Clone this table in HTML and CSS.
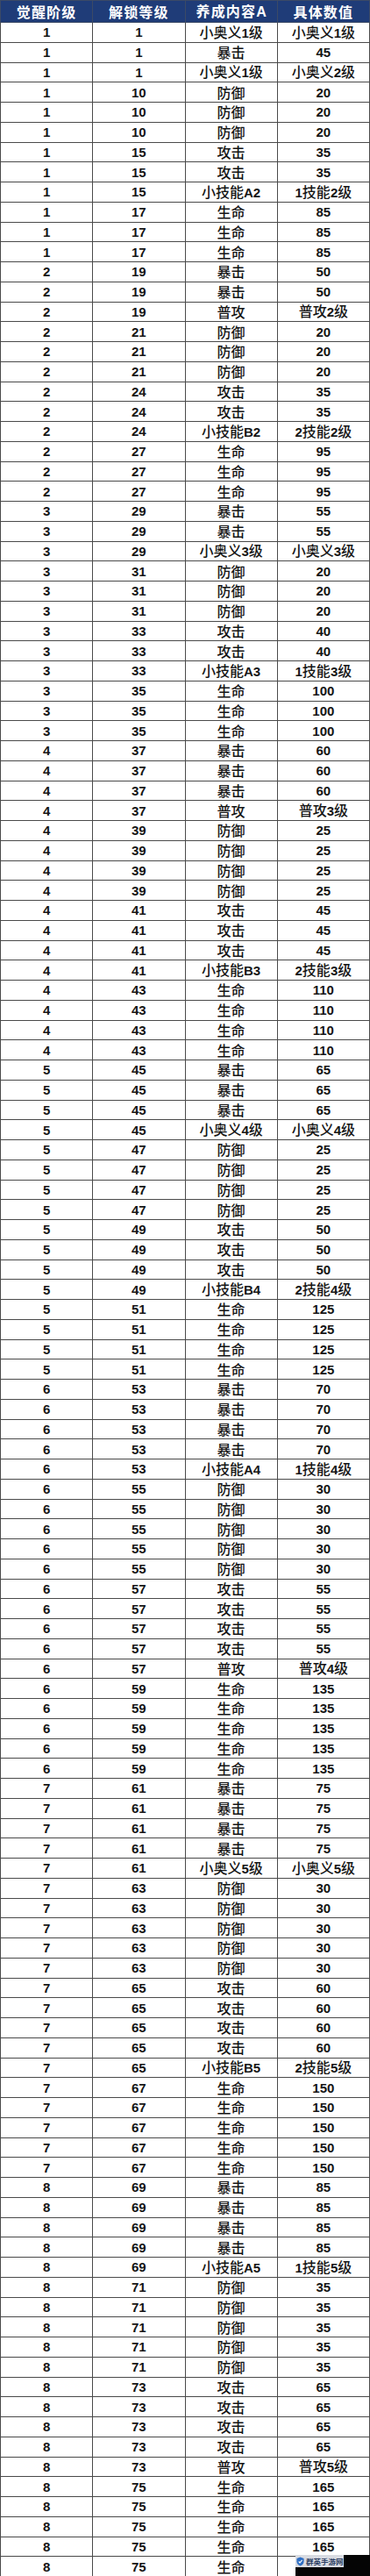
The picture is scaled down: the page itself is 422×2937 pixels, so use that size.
FILE: index.html
```html
<!DOCTYPE html>
<html lang="zh-CN">
<head>
<meta charset="utf-8">
<title>觉醒养成表</title>
<link rel="stylesheet" href="styles.css">
</head>
<body>
<div class="sheet">
<table class="grid">
<colgroup><col class="c1"><col class="c2"><col class="c3"><col class="c4"></colgroup>
<thead>
<tr class="head"><th>觉醒阶级</th><th>解锁等级</th><th>养成内容<b>A</b></th><th>具体数值</th></tr>
</thead>
<tbody>
<tr><td class="n">1</td><td class="n">1</td><td>小奥义<b>1</b>级</td><td>小奥义<b>1</b>级</td></tr>
<tr><td class="n">1</td><td class="n">1</td><td>暴击</td><td class="n">45</td></tr>
<tr><td class="n">1</td><td class="n">1</td><td>小奥义<b>1</b>级</td><td>小奥义<b>2</b>级</td></tr>
<tr><td class="n">1</td><td class="n">10</td><td>防御</td><td class="n">20</td></tr>
<tr><td class="n">1</td><td class="n">10</td><td>防御</td><td class="n">20</td></tr>
<tr><td class="n">1</td><td class="n">10</td><td>防御</td><td class="n">20</td></tr>
<tr><td class="n">1</td><td class="n">15</td><td>攻击</td><td class="n">35</td></tr>
<tr><td class="n">1</td><td class="n">15</td><td>攻击</td><td class="n">35</td></tr>
<tr><td class="n">1</td><td class="n">15</td><td>小技能<b>A2</b></td><td><b>1</b>技能<b>2</b>级</td></tr>
<tr><td class="n">1</td><td class="n">17</td><td>生命</td><td class="n">85</td></tr>
<tr><td class="n">1</td><td class="n">17</td><td>生命</td><td class="n">85</td></tr>
<tr><td class="n">1</td><td class="n">17</td><td>生命</td><td class="n">85</td></tr>
<tr><td class="n">2</td><td class="n">19</td><td>暴击</td><td class="n">50</td></tr>
<tr><td class="n">2</td><td class="n">19</td><td>暴击</td><td class="n">50</td></tr>
<tr><td class="n">2</td><td class="n">19</td><td>普攻</td><td>普攻<b>2</b>级</td></tr>
<tr><td class="n">2</td><td class="n">21</td><td>防御</td><td class="n">20</td></tr>
<tr><td class="n">2</td><td class="n">21</td><td>防御</td><td class="n">20</td></tr>
<tr><td class="n">2</td><td class="n">21</td><td>防御</td><td class="n">20</td></tr>
<tr><td class="n">2</td><td class="n">24</td><td>攻击</td><td class="n">35</td></tr>
<tr><td class="n">2</td><td class="n">24</td><td>攻击</td><td class="n">35</td></tr>
<tr><td class="n">2</td><td class="n">24</td><td>小技能<b>B2</b></td><td><b>2</b>技能<b>2</b>级</td></tr>
<tr><td class="n">2</td><td class="n">27</td><td>生命</td><td class="n">95</td></tr>
<tr><td class="n">2</td><td class="n">27</td><td>生命</td><td class="n">95</td></tr>
<tr><td class="n">2</td><td class="n">27</td><td>生命</td><td class="n">95</td></tr>
<tr><td class="n">3</td><td class="n">29</td><td>暴击</td><td class="n">55</td></tr>
<tr><td class="n">3</td><td class="n">29</td><td>暴击</td><td class="n">55</td></tr>
<tr><td class="n">3</td><td class="n">29</td><td>小奥义<b>3</b>级</td><td>小奥义<b>3</b>级</td></tr>
<tr><td class="n">3</td><td class="n">31</td><td>防御</td><td class="n">20</td></tr>
<tr><td class="n">3</td><td class="n">31</td><td>防御</td><td class="n">20</td></tr>
<tr><td class="n">3</td><td class="n">31</td><td>防御</td><td class="n">20</td></tr>
<tr><td class="n">3</td><td class="n">33</td><td>攻击</td><td class="n">40</td></tr>
<tr><td class="n">3</td><td class="n">33</td><td>攻击</td><td class="n">40</td></tr>
<tr><td class="n">3</td><td class="n">33</td><td>小技能<b>A3</b></td><td><b>1</b>技能<b>3</b>级</td></tr>
<tr><td class="n">3</td><td class="n">35</td><td>生命</td><td class="n">100</td></tr>
<tr><td class="n">3</td><td class="n">35</td><td>生命</td><td class="n">100</td></tr>
<tr><td class="n">3</td><td class="n">35</td><td>生命</td><td class="n">100</td></tr>
<tr><td class="n">4</td><td class="n">37</td><td>暴击</td><td class="n">60</td></tr>
<tr><td class="n">4</td><td class="n">37</td><td>暴击</td><td class="n">60</td></tr>
<tr><td class="n">4</td><td class="n">37</td><td>暴击</td><td class="n">60</td></tr>
<tr><td class="n">4</td><td class="n">37</td><td>普攻</td><td>普攻<b>3</b>级</td></tr>
<tr><td class="n">4</td><td class="n">39</td><td>防御</td><td class="n">25</td></tr>
<tr><td class="n">4</td><td class="n">39</td><td>防御</td><td class="n">25</td></tr>
<tr><td class="n">4</td><td class="n">39</td><td>防御</td><td class="n">25</td></tr>
<tr><td class="n">4</td><td class="n">39</td><td>防御</td><td class="n">25</td></tr>
<tr><td class="n">4</td><td class="n">41</td><td>攻击</td><td class="n">45</td></tr>
<tr><td class="n">4</td><td class="n">41</td><td>攻击</td><td class="n">45</td></tr>
<tr><td class="n">4</td><td class="n">41</td><td>攻击</td><td class="n">45</td></tr>
<tr><td class="n">4</td><td class="n">41</td><td>小技能<b>B3</b></td><td><b>2</b>技能<b>3</b>级</td></tr>
<tr><td class="n">4</td><td class="n">43</td><td>生命</td><td class="n">110</td></tr>
<tr><td class="n">4</td><td class="n">43</td><td>生命</td><td class="n">110</td></tr>
<tr><td class="n">4</td><td class="n">43</td><td>生命</td><td class="n">110</td></tr>
<tr><td class="n">4</td><td class="n">43</td><td>生命</td><td class="n">110</td></tr>
<tr><td class="n">5</td><td class="n">45</td><td>暴击</td><td class="n">65</td></tr>
<tr><td class="n">5</td><td class="n">45</td><td>暴击</td><td class="n">65</td></tr>
<tr><td class="n">5</td><td class="n">45</td><td>暴击</td><td class="n">65</td></tr>
<tr><td class="n">5</td><td class="n">45</td><td>小奥义<b>4</b>级</td><td>小奥义<b>4</b>级</td></tr>
<tr><td class="n">5</td><td class="n">47</td><td>防御</td><td class="n">25</td></tr>
<tr><td class="n">5</td><td class="n">47</td><td>防御</td><td class="n">25</td></tr>
<tr><td class="n">5</td><td class="n">47</td><td>防御</td><td class="n">25</td></tr>
<tr><td class="n">5</td><td class="n">47</td><td>防御</td><td class="n">25</td></tr>
<tr><td class="n">5</td><td class="n">49</td><td>攻击</td><td class="n">50</td></tr>
<tr><td class="n">5</td><td class="n">49</td><td>攻击</td><td class="n">50</td></tr>
<tr><td class="n">5</td><td class="n">49</td><td>攻击</td><td class="n">50</td></tr>
<tr><td class="n">5</td><td class="n">49</td><td>小技能<b>B4</b></td><td><b>2</b>技能<b>4</b>级</td></tr>
<tr><td class="n">5</td><td class="n">51</td><td>生命</td><td class="n">125</td></tr>
<tr><td class="n">5</td><td class="n">51</td><td>生命</td><td class="n">125</td></tr>
<tr><td class="n">5</td><td class="n">51</td><td>生命</td><td class="n">125</td></tr>
<tr><td class="n">5</td><td class="n">51</td><td>生命</td><td class="n">125</td></tr>
<tr><td class="n">6</td><td class="n">53</td><td>暴击</td><td class="n">70</td></tr>
<tr><td class="n">6</td><td class="n">53</td><td>暴击</td><td class="n">70</td></tr>
<tr><td class="n">6</td><td class="n">53</td><td>暴击</td><td class="n">70</td></tr>
<tr><td class="n">6</td><td class="n">53</td><td>暴击</td><td class="n">70</td></tr>
<tr><td class="n">6</td><td class="n">53</td><td>小技能<b>A4</b></td><td><b>1</b>技能<b>4</b>级</td></tr>
<tr><td class="n">6</td><td class="n">55</td><td>防御</td><td class="n">30</td></tr>
<tr><td class="n">6</td><td class="n">55</td><td>防御</td><td class="n">30</td></tr>
<tr><td class="n">6</td><td class="n">55</td><td>防御</td><td class="n">30</td></tr>
<tr><td class="n">6</td><td class="n">55</td><td>防御</td><td class="n">30</td></tr>
<tr><td class="n">6</td><td class="n">55</td><td>防御</td><td class="n">30</td></tr>
<tr><td class="n">6</td><td class="n">57</td><td>攻击</td><td class="n">55</td></tr>
<tr><td class="n">6</td><td class="n">57</td><td>攻击</td><td class="n">55</td></tr>
<tr><td class="n">6</td><td class="n">57</td><td>攻击</td><td class="n">55</td></tr>
<tr><td class="n">6</td><td class="n">57</td><td>攻击</td><td class="n">55</td></tr>
<tr><td class="n">6</td><td class="n">57</td><td>普攻</td><td>普攻<b>4</b>级</td></tr>
<tr><td class="n">6</td><td class="n">59</td><td>生命</td><td class="n">135</td></tr>
<tr><td class="n">6</td><td class="n">59</td><td>生命</td><td class="n">135</td></tr>
<tr><td class="n">6</td><td class="n">59</td><td>生命</td><td class="n">135</td></tr>
<tr><td class="n">6</td><td class="n">59</td><td>生命</td><td class="n">135</td></tr>
<tr><td class="n">6</td><td class="n">59</td><td>生命</td><td class="n">135</td></tr>
<tr><td class="n">7</td><td class="n">61</td><td>暴击</td><td class="n">75</td></tr>
<tr><td class="n">7</td><td class="n">61</td><td>暴击</td><td class="n">75</td></tr>
<tr><td class="n">7</td><td class="n">61</td><td>暴击</td><td class="n">75</td></tr>
<tr><td class="n">7</td><td class="n">61</td><td>暴击</td><td class="n">75</td></tr>
<tr><td class="n">7</td><td class="n">61</td><td>小奥义<b>5</b>级</td><td>小奥义<b>5</b>级</td></tr>
<tr><td class="n">7</td><td class="n">63</td><td>防御</td><td class="n">30</td></tr>
<tr><td class="n">7</td><td class="n">63</td><td>防御</td><td class="n">30</td></tr>
<tr><td class="n">7</td><td class="n">63</td><td>防御</td><td class="n">30</td></tr>
<tr><td class="n">7</td><td class="n">63</td><td>防御</td><td class="n">30</td></tr>
<tr><td class="n">7</td><td class="n">63</td><td>防御</td><td class="n">30</td></tr>
<tr><td class="n">7</td><td class="n">65</td><td>攻击</td><td class="n">60</td></tr>
<tr><td class="n">7</td><td class="n">65</td><td>攻击</td><td class="n">60</td></tr>
<tr><td class="n">7</td><td class="n">65</td><td>攻击</td><td class="n">60</td></tr>
<tr><td class="n">7</td><td class="n">65</td><td>攻击</td><td class="n">60</td></tr>
<tr><td class="n">7</td><td class="n">65</td><td>小技能<b>B5</b></td><td><b>2</b>技能<b>5</b>级</td></tr>
<tr><td class="n">7</td><td class="n">67</td><td>生命</td><td class="n">150</td></tr>
<tr><td class="n">7</td><td class="n">67</td><td>生命</td><td class="n">150</td></tr>
<tr><td class="n">7</td><td class="n">67</td><td>生命</td><td class="n">150</td></tr>
<tr><td class="n">7</td><td class="n">67</td><td>生命</td><td class="n">150</td></tr>
<tr><td class="n">7</td><td class="n">67</td><td>生命</td><td class="n">150</td></tr>
<tr><td class="n">8</td><td class="n">69</td><td>暴击</td><td class="n">85</td></tr>
<tr><td class="n">8</td><td class="n">69</td><td>暴击</td><td class="n">85</td></tr>
<tr><td class="n">8</td><td class="n">69</td><td>暴击</td><td class="n">85</td></tr>
<tr><td class="n">8</td><td class="n">69</td><td>暴击</td><td class="n">85</td></tr>
<tr><td class="n">8</td><td class="n">69</td><td>小技能<b>A5</b></td><td><b>1</b>技能<b>5</b>级</td></tr>
<tr><td class="n">8</td><td class="n">71</td><td>防御</td><td class="n">35</td></tr>
<tr><td class="n">8</td><td class="n">71</td><td>防御</td><td class="n">35</td></tr>
<tr><td class="n">8</td><td class="n">71</td><td>防御</td><td class="n">35</td></tr>
<tr><td class="n">8</td><td class="n">71</td><td>防御</td><td class="n">35</td></tr>
<tr><td class="n">8</td><td class="n">71</td><td>防御</td><td class="n">35</td></tr>
<tr><td class="n">8</td><td class="n">73</td><td>攻击</td><td class="n">65</td></tr>
<tr><td class="n">8</td><td class="n">73</td><td>攻击</td><td class="n">65</td></tr>
<tr><td class="n">8</td><td class="n">73</td><td>攻击</td><td class="n">65</td></tr>
<tr><td class="n">8</td><td class="n">73</td><td>攻击</td><td class="n">65</td></tr>
<tr><td class="n">8</td><td class="n">73</td><td>普攻</td><td>普攻<b>5</b>级</td></tr>
<tr><td class="n">8</td><td class="n">75</td><td>生命</td><td class="n">165</td></tr>
<tr><td class="n">8</td><td class="n">75</td><td>生命</td><td class="n">165</td></tr>
<tr><td class="n">8</td><td class="n">75</td><td>生命</td><td class="n">165</td></tr>
<tr><td class="n">8</td><td class="n">75</td><td>生命</td><td class="n">165</td></tr>
<tr><td class="n">8</td><td class="n">75</td><td>生命</td><td class="n">165</td></tr>
</tbody>
</table>
<div class="mark">
  <div class="mark-label">
    <svg class="mark-icon" viewBox="0 0 10 12" width="9" height="11" aria-hidden="true">
      <path d="M5 0.5 L9.5 2 V6 C9.5 9 7.3 10.8 5 11.5 C2.7 10.8 0.5 9 0.5 6 V2 Z" fill="#2f6fc4"/>
      <path d="M3 6 L4.5 7.5 L7.3 4.3" fill="none" stroke="#ffffff" stroke-width="1.2"/>
    </svg>
    <span class="mark-text">群英手游网</span>
  </div>
</div>
</div>
</body>
</html>
```

FILE: styles.css
```css
html, body {
  margin: 0;
  padding: 0;
  background: #ffffff;
}

.sheet {
  position: relative;
  width: 422px;
  height: 2937px;
  overflow: hidden;
  background: #ffffff;
}

.grid {
  width: 422px;
  table-layout: fixed;
  border-collapse: collapse;
  font-family: "Liberation Sans", "Noto Sans CJK SC", sans-serif;
  color: #151515;
}

.c1, .c2, .c3, .c4 { width: 25%; }

.grid th,
.grid td {
  border: 1px solid #4a4a4a;
  padding: 0;
  text-align: center;
  vertical-align: middle;
  white-space: nowrap;
}

.head th {
  height: 22px;
  background: #1f3c78;
  color: #ffffff;
  font-family: "Noto Sans CJK SC", sans-serif;
  font-size: 16px;
  letter-spacing: 1.2px;
  font-weight: 700;
  line-height: 22px;
  border-color: #3b4a66;
}

.head th b {
  font-family: "Liberation Sans", sans-serif;
  font-weight: 700;
  letter-spacing: 0;
}

.grid tbody tr {
  height: 22.75px;
}

.grid td {
  font-size: 16px;
  line-height: 19px;
  font-weight: 500;
  font-family: "Noto Sans CJK SC", sans-serif;
}

.grid td b {
  font-family: "Liberation Sans", sans-serif;
  font-weight: 700;
  font-size: 15px;
}

.grid td.n {
  font-family: "Liberation Sans", sans-serif;
  font-weight: 700;
  font-size: 15px;
}

.mark {
  position: absolute;
  left: 337px;
  top: 2913px;
  width: 85px;
  height: 24px;
  background: #050505;
}

.mark-label {
  display: flex;
  align-items: center;
  gap: 2px;
  width: 55px;
  height: 14px;
  padding-left: 1px;
  box-sizing: border-box;
  background: rgba(235, 238, 244, 0.92);
}

.mark-icon { flex: none; }

.mark-text {
  font-family: "Noto Sans CJK SC", sans-serif;
  font-size: 8.5px;
  line-height: 10px;
  font-weight: 700;
  color: #2d3f63;
  white-space: nowrap;
}
```
